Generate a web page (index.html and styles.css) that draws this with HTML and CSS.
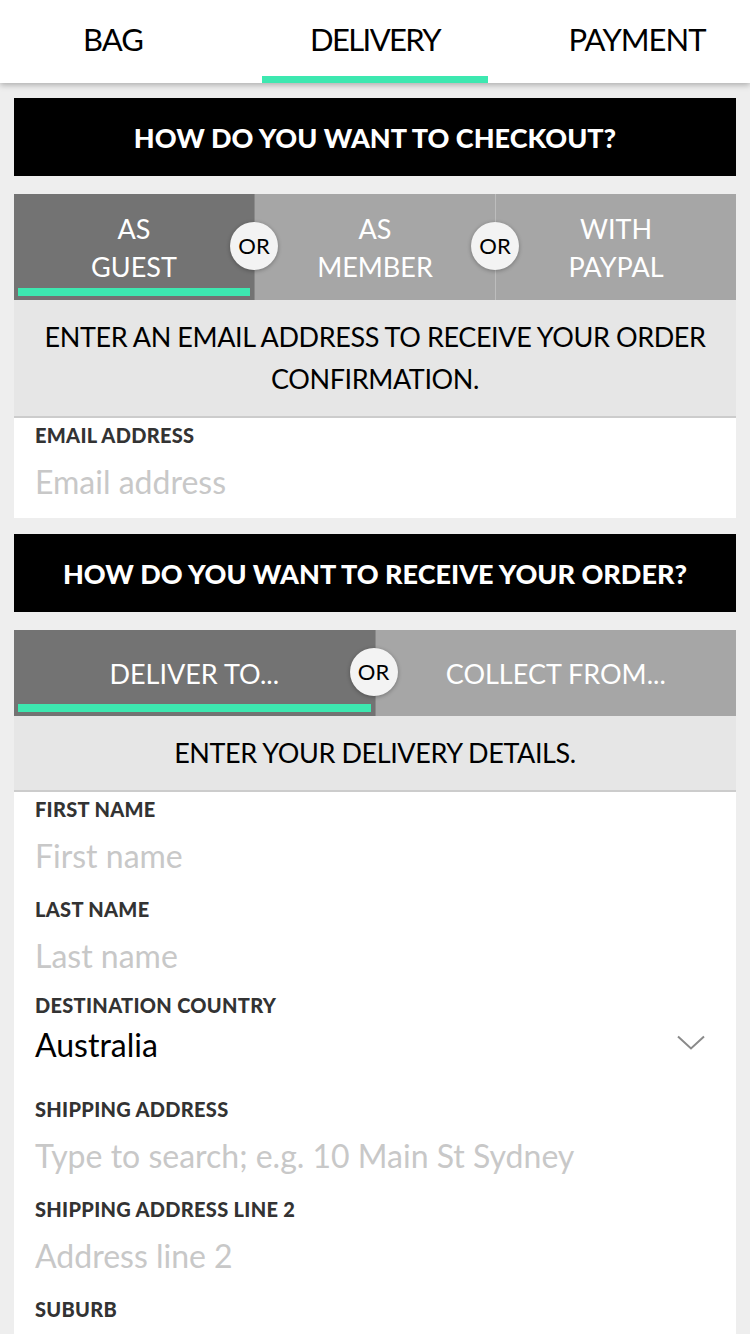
FILE: index.html
```html
<!DOCTYPE html>
<html lang="en">
<head>
<meta charset="utf-8">
<title>Checkout - Delivery</title>
<link rel="stylesheet" href="styles.css">
</head>
<body>
<header class="steps">
  <div class="step">BAG</div>
  <div class="step step-active">DELIVERY</div>
  <div class="step">PAYMENT</div>
</header>
<main class="page">
  <section class="block">
    <h2 class="bar">HOW DO YOU WANT TO CHECKOUT?</h2>
    <div class="panel">
      <div class="segments segments-tall">
        <div class="seg seg-active"><span class="seg-text">AS<br>GUEST</span><span class="or">OR</span></div>
        <div class="seg"><span class="seg-text">AS<br>MEMBER</span><span class="or">OR</span></div>
        <div class="seg"><span class="seg-text">WITH<br>PAYPAL</span></div>
      </div>
      <p class="info">ENTER AN EMAIL ADDRESS TO RECEIVE YOUR ORDER CONFIRMATION.</p>
      <div class="form form-email">
        <label class="field">
          <span class="label">EMAIL ADDRESS</span>
          <span class="input placeholder">Email address</span>
        </label>
      </div>
    </div>
  </section>

  <section class="block">
    <h2 class="bar">HOW DO YOU WANT TO RECEIVE YOUR ORDER?</h2>
    <div class="panel">
      <div class="segments">
        <div class="seg seg-active"><span class="seg-text">DELIVER TO...</span><span class="or">OR</span></div>
        <div class="seg"><span class="seg-text">COLLECT FROM...</span></div>
      </div>
      <p class="info">ENTER YOUR DELIVERY DETAILS.</p>
      <div class="form">
        <label class="field">
          <span class="label">FIRST NAME</span>
          <span class="input placeholder">First name</span>
        </label>
        <label class="field">
          <span class="label">LAST NAME</span>
          <span class="input placeholder">Last name</span>
        </label>
        <label class="field field-select">
          <span class="label">DESTINATION COUNTRY</span>
          <span class="select">
            <span class="input value">Australia</span>
            <svg class="chevron" width="28" height="15" viewBox="0 0 28 15" aria-hidden="true"><path d="M1 1.5 L14 13.5 L27 1.5" fill="none" stroke="#8a8a8a" stroke-width="2"/></svg>
          </span>
        </label>
        <label class="field">
          <span class="label">SHIPPING ADDRESS</span>
          <span class="input placeholder">Type to search; e.g. 10 Main St Sydney</span>
        </label>
        <label class="field">
          <span class="label">SHIPPING ADDRESS LINE 2</span>
          <span class="input placeholder">Address line 2</span>
        </label>
        <label class="field">
          <span class="label">SUBURB</span>
          <span class="input placeholder"></span>
        </label>
      </div>
    </div>
  </section>
</main>
</body>
</html>
```

FILE: styles.css
```css
* { box-sizing: border-box; }
html, body { margin: 0; padding: 0; }
body {
  background: #eeeeee;
  font-family: "Lato", "Noto Sans", sans-serif;
  color: #000;
  width: 750px;
  height: 1334px;
  overflow: hidden;
}

.steps {
  position: relative;
  z-index: 2;
  height: 83px;
  background: #fff;
  display: grid;
  grid-template-columns: 226px 226px 226px;
  column-gap: 36px;
  box-shadow: 0 2px 6px rgba(0,0,0,0.28);
}
.step {
  display: flex;
  align-items: center;
  justify-content: center;
  font-size: 31px;
  letter-spacing: -1px;
  padding-bottom: 6px;
  color: #000;
}
.step-active {
  border-bottom: 7px solid #3de8b0;
  padding-bottom: 0;
  padding-top: 1px;
}
.step-active { letter-spacing: -1.6px; }

.page {
  padding: 15px 14px 0;
  display: flex;
  flex-direction: column;
  gap: 16px;
}
.block { display: flex; flex-direction: column; gap: 18px; }
.panel { display: flex; flex-direction: column; }

.bar {
  margin: 0;
  height: 78px;
  background: #000;
  color: #fff;
  display: flex;
  align-items: center;
  justify-content: center;
  font-size: 27px;
  font-weight: 900;
  letter-spacing: 0;
}

.segments {
  display: flex;
  height: 86px;
  background: #a6a6a6;
}
.segments-tall { height: 106px; }
.seg {
  flex: 1;
  position: relative;
  display: flex;
  align-items: center;
  justify-content: center;
  color: #fff;
  font-size: 27px;
  line-height: 38px;
  text-align: center;
  background: #a6a6a6;
  padding-top: 2px;
}
.seg + .seg { border-left: 1px solid #bdbdbd; }
.seg-active { background: #737373; }
.seg-active + .seg { border-left-color: #8a8a8a; }
.seg-active::after {
  content: "";
  position: absolute;
  left: 4px;
  right: 4px;
  bottom: 4px;
  height: 8px;
  background: #3de8b0;
}
.or {
  position: absolute;
  z-index: 1;
  right: -24px;
  top: 50%;
  margin-top: -25px;
  width: 48px;
  height: 48px;
  border-radius: 50%;
  background: #f3f3f3;
  color: #000;
  font-size: 22px;
  line-height: 48px;
  text-align: center;
  box-shadow: 0 1px 4px rgba(0,0,0,0.3);
}
.segments:not(.segments-tall) .or { right: -23px; }

.info {
  margin: 0;
  background: #e6e6e6;
  border-bottom: 2px solid #cccccc;
  padding: 16px 8px;
  font-size: 27px;
  letter-spacing: -0.4px;
  line-height: 42px;
  text-align: center;
  color: #000;
}

.form {
  background: #fff;
  padding: 0 21px 20px;
  display: flex;
  flex-direction: column;
}
.form-email { padding-bottom: 14px; }
.field {
  display: flex;
  flex-direction: column;
  padding-top: 5px;
  height: 100px;
}
.form-email .field { height: 86px; }
.field-select { padding-top: 1px; }
.label {
  font-size: 20px;
  line-height: 24px;
  font-weight: 900;
  letter-spacing: 0.3px;
  color: #333;
}
.input {
  font-size: 32px;
  line-height: 50px;
  padding-top: 10px;
}
.placeholder { color: #c8c8c8; }
.value { color: #000; padding-top: 5px; line-height: 46px; }
.select {
  display: flex;
  align-items: center;
  justify-content: space-between;
}
.chevron { margin-right: 10px; margin-top: 0; }
```
